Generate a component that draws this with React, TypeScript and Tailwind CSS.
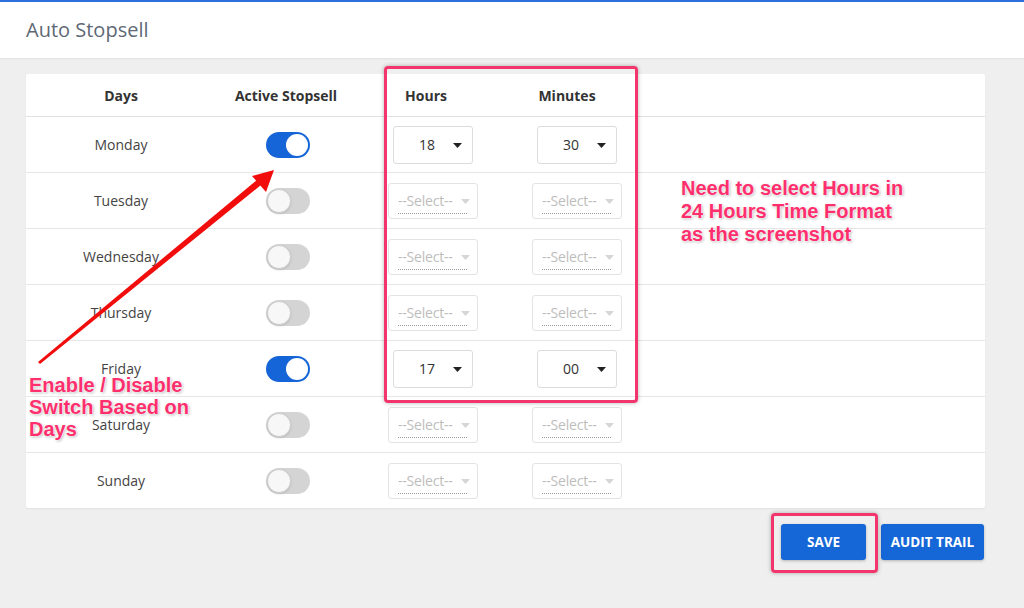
import React from "react";

type Row = { day: string; on: boolean; h?: string; m?: string };

const rows: Row[] = [
  { day: "Monday", on: true, h: "18", m: "30" },
  { day: "Tuesday", on: false },
  { day: "Wednesday", on: false },
  { day: "Thursday", on: false },
  { day: "Friday", on: true, h: "17", m: "00" },
  { day: "Saturday", on: false },
  { day: "Sunday", on: false },
];

function Toggle({ on }: { on: boolean }) {
  return on ? (
    <div className="w-[44px] h-[26px] rounded-full bg-[#1565d8] flex items-center justify-end pr-[2px]">
      <div className="w-[22px] h-[22px] rounded-full bg-white" />
    </div>
  ) : (
    <div className="w-[44px] h-[26px] rounded-full bg-[#d4d4d4] flex items-center pl-[1px]">
      <div className="w-[24px] h-[24px] rounded-full bg-[#f7f7f7] border border-[#cfcfcf] shadow-sm" />
    </div>
  );
}

function Caret({ light }: { light?: boolean }) {
  return (
    <svg width="9" height="5" viewBox="0 0 9 5">
      <path d="M0 0 L9 0 L4.5 5 Z" fill={light ? "#d6d6d6" : "#222"} />
    </svg>
  );
}

function Sel({ v }: { v?: string }) {
  if (v)
    return (
      <div className="relative w-[80px] h-[38px] border border-[#dcdcdc] rounded-[3px] bg-white flex items-center">
        <span className="pl-[25px] text-[14px] text-[#333]">{v}</span>
        <span className="absolute right-[10px] top-[16px] flex">
          <Caret />
        </span>
      </div>
    );
  return (
    <div className="relative w-[90px] h-[36px] border border-[#e3e3e3] rounded-[3px] bg-white">
      <span className="absolute left-[9px] top-[7px] text-[14px] leading-[20px] text-[#bdbdbd] tracking-[-0.2px]">--Select--</span>
      <div className="absolute left-[9px] right-[10px] top-[29px] border-b border-dotted border-[#9a9a9a]" />
      <span className="absolute right-[7px] top-[15px] flex">
        <Caret light />
      </span>
    </div>
  );
}

export default function App() {
  const font = { fontFamily: '"Open Sans", "Noto Sans", sans-serif' };
  const ann = {
    fontFamily: '"Liberation Sans", Arial, sans-serif',
    textShadow:
      "0 0 2px #fff, 0 0 2px #fff, 1px 1px 3px rgba(0,0,0,0.35)",
  };
  return (
    <div className="relative w-[1024px] h-[608px] bg-[#efefef] overflow-hidden" style={font}>
      <div className="h-[58px] bg-white border-t-2 border-[#2a6fdc] shadow-[0_1px_2px_rgba(0,0,0,0.06)] flex items-center px-[26px]">
        <h1 className="text-[20px] text-[#5f6875] font-normal">Auto Stopsell</h1>
      </div>
      <div className="pl-[26px] pt-[16px]">
        <div className="w-[959px] bg-white rounded-[2px] shadow-[0_1px_2px_rgba(0,0,0,0.06)]">
          <div className="flex h-[43px] items-center border-b border-[#e2e2e2] text-[14px] font-bold text-[#333]">
            <div className="w-[190px] text-center">Days</div>
            <div className="w-[140px] text-center">Active Stopsell</div>
            <div className="w-[144px] text-center pr-[4px]">Hours</div>
            <div className="w-[144px] text-center pr-[10px]">Minutes</div>
          </div>
          {rows.map((r, i) => (
            <div
              key={r.day}
              className={`flex items-center ${i < rows.length - 1 ? "h-[56px] border-b border-[#e6e6e6]" : "h-[55px]"}`}
            >
              <div className="w-[190px] text-center text-[14px] text-[#444]">{r.day}</div>
              <div className="w-[140px] flex justify-center pl-[4px]">
                <Toggle on={r.on} />
              </div>
              <div className="w-[144px] flex justify-center pl-[10px]">
                <Sel v={r.h} />
              </div>
              <div className="w-[144px] flex justify-center pl-[10px]">
                <Sel v={r.m} />
              </div>
            </div>
          ))}
        </div>
        <div className="flex justify-end gap-[15px] pr-[40px] mt-[16px]">
          <button className="w-[85px] h-[36px] bg-[#1567d8] rounded-[3px] text-white text-[13.5px] font-bold shadow-[0_1px_3px_rgba(0,0,0,0.25)]">
            SAVE
          </button>
          <button className="w-[103px] h-[36px] bg-[#1567d8] rounded-[3px] text-white text-[13.5px] font-bold shadow-[0_1px_3px_rgba(0,0,0,0.25)]">
            AUDIT TRAIL
          </button>
        </div>
      </div>

      {/* annotations */}
      <div className="absolute left-[384px] top-[66px] w-[254px] h-[337px] border-[3px] border-[#f2356d] rounded-[4px] shadow-[0_0_4px_rgba(0,0,0,0.3)]" />
      <div className="absolute left-[771px] top-[513px] w-[107px] h-[60px] border-[3px] border-[#f2356d] rounded-[4px] shadow-[0_0_4px_rgba(0,0,0,0.3)]" />
      <svg className="absolute left-0 top-0" width="1024" height="608">
        <polygon points="38,362 257,180 261,185 40,364" fill="#f20d0d" />
        <polygon points="274,170 252,176 266,192" fill="#f20d0d" />
      </svg>
      <div
        className="absolute left-[681px] top-[177px] text-[20px] leading-[23px] font-bold text-[#ff2f6e]"
        style={ann}
      >
        Need to select Hours in
        <br />
        24 Hours Time Format
        <br />
        as the screenshot
      </div>
      <div
        className="absolute left-[29px] top-[374px] text-[20px] leading-[22px] font-bold text-[#ff2f6e]"
        style={ann}
      >
        Enable / Disable
        <br />
        Switch Based on
        <br />
        Days
      </div>
    </div>
  );
}
